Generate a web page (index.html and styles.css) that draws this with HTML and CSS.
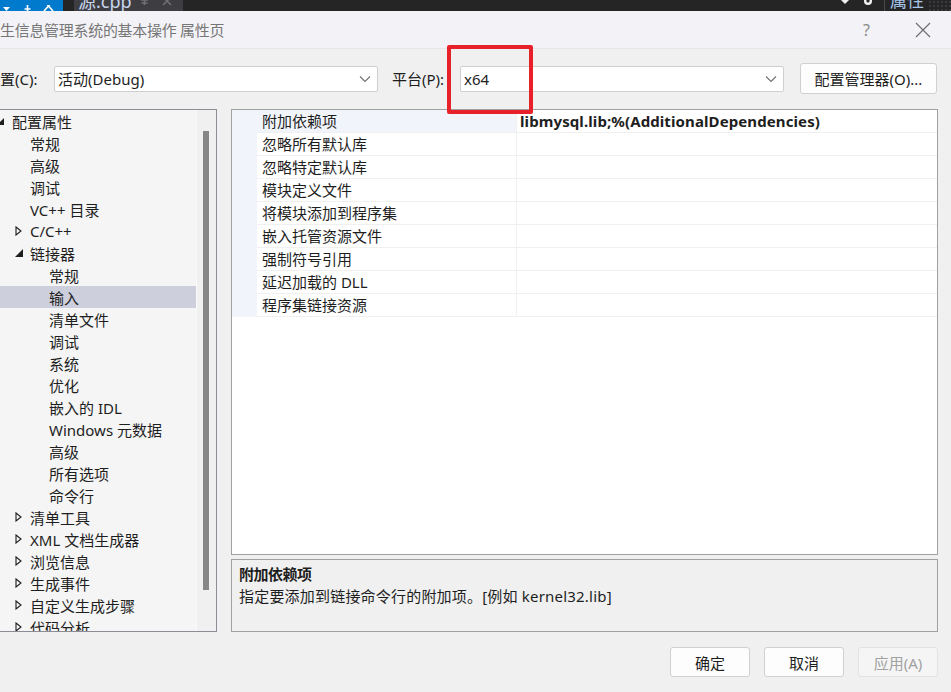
FILE: index.html
```html
<!DOCTYPE html>
<html lang="zh-CN">
<head>
<meta charset="utf-8">
<title>属性页</title>
<link rel="stylesheet" href="styles.css">
</head>
<body>
<div class="page">
  <div class="topbar">
    <div class="tb-blue">
      <svg width="63" height="11" viewBox="0 0 63 11">
        <polygon points="3,2 10,2 6.5,6" fill="#fff"/>
        <path d="M24 -2 L31 -2 M27.5 -2 V4 M24.5 4 H30.5 M27.5 4 V9" stroke="#fff" stroke-width="1.6" fill="none"/>
        <path d="M44 -4 L53 6 M53 -4 L44 6" stroke="#fff" stroke-width="1.6" fill="none"/>
      </svg>
    </div>
    <div class="tb-gap"></div>
    <div class="tb-tab">
      <span class="tb-tabtext">源.cpp</span>
      <svg width="40" height="11" viewBox="0 0 40 11" class="tb-tabicons">
        <path d="M3 0 H10 M6.5 0 V5 M3.5 3 H9.5" stroke="#6f6f74" stroke-width="1.5" fill="none"/>
        <path d="M25 -3 L33 5 M33 -3 L25 5" stroke="#6f6f74" stroke-width="1.5" fill="none"/>
      </svg>
    </div>
    <div class="tb-fill"></div>
    <svg width="40" height="11" viewBox="0 0 40 11" class="tb-right">
      <polygon points="0,0 8,0 4,4" fill="#f1f1f1"/>
      <circle cx="27" cy="1" r="4" fill="#f1f1f1"/>
      <circle cx="27" cy="1" r="1.6" fill="#252526"/>
    </svg>
    <div class="tb-sep"></div>
    <span class="tb-prop">属性</span>
    <div class="tb-dots"></div>
  </div>

  <div class="titlebar">
    <span class="title">生信息管理系统的基本操作 属性页</span>
    <span class="help">?</span>
    <svg class="close" width="16" height="16" viewBox="0 0 16 16">
      <path d="M1 1 L15 15 M15 1 L1 15" stroke="#6e6e6e" stroke-width="1.2" fill="none"/>
    </svg>
  </div>

  <div class="config">
    <span class="lbl lbl-c">置(C):</span>
    <div class="select">
      <span>活动(Debug)</span>
      <svg width="12" height="8" viewBox="0 0 12 8"><path d="M1 1.5 L6 6.5 L11 1.5" stroke="#707070" stroke-width="1.1" fill="none"/></svg>
    </div>
    <span class="lbl lbl-p">平台(P):</span>
    <div class="select">
      <span>x64</span>
      <svg width="12" height="8" viewBox="0 0 12 8"><path d="M1 1.5 L6 6.5 L11 1.5" stroke="#707070" stroke-width="1.1" fill="none"/></svg>
    </div>
    <button class="btn cfgbtn">配置管理器(O)...</button>
  </div>

  <div class="main">
    <div class="tree">
      <div class="tree-list">
        <div class="row l1"><span class="tw"><svg width="7" height="7" viewBox="0 0 7 7"><polygon points="7,0 7,7 0,7" fill="#1e1e1e"/></svg></span>配置属性</div>
        <div class="row l2"><span class="tw"></span>常规</div>
        <div class="row l2"><span class="tw"></span>高级</div>
        <div class="row l2"><span class="tw"></span>调试</div>
        <div class="row l2"><span class="tw"></span>VC++ 目录</div>
        <div class="row l2"><span class="tw"><svg width="7" height="10" viewBox="0 0 7 10"><polygon points="1,1 6,5 1,9" fill="none" stroke="#1e1e1e" stroke-width="1.1"/></svg></span>C/C++</div>
        <div class="row l2"><span class="tw"><svg width="8" height="8" viewBox="0 0 8 8"><polygon points="8,0 8,8 0,8" fill="#1e1e1e"/></svg></span>链接器</div>
        <div class="row l3"><span class="tw"></span>常规</div>
        <div class="row l3 sel"><span class="tw"></span>输入</div>
        <div class="row l3"><span class="tw"></span>清单文件</div>
        <div class="row l3"><span class="tw"></span>调试</div>
        <div class="row l3"><span class="tw"></span>系统</div>
        <div class="row l3"><span class="tw"></span>优化</div>
        <div class="row l3"><span class="tw"></span>嵌入的 IDL</div>
        <div class="row l3"><span class="tw"></span>Windows 元数据</div>
        <div class="row l3"><span class="tw"></span>高级</div>
        <div class="row l3"><span class="tw"></span>所有选项</div>
        <div class="row l3"><span class="tw"></span>命令行</div>
        <div class="row l2"><span class="tw"><svg width="7" height="10" viewBox="0 0 7 10"><polygon points="1,1 6,5 1,9" fill="none" stroke="#1e1e1e" stroke-width="1.1"/></svg></span>清单工具</div>
        <div class="row l2"><span class="tw"><svg width="7" height="10" viewBox="0 0 7 10"><polygon points="1,1 6,5 1,9" fill="none" stroke="#1e1e1e" stroke-width="1.1"/></svg></span>XML 文档生成器</div>
        <div class="row l2"><span class="tw"><svg width="7" height="10" viewBox="0 0 7 10"><polygon points="1,1 6,5 1,9" fill="none" stroke="#1e1e1e" stroke-width="1.1"/></svg></span>浏览信息</div>
        <div class="row l2"><span class="tw"><svg width="7" height="10" viewBox="0 0 7 10"><polygon points="1,1 6,5 1,9" fill="none" stroke="#1e1e1e" stroke-width="1.1"/></svg></span>生成事件</div>
        <div class="row l2"><span class="tw"><svg width="7" height="10" viewBox="0 0 7 10"><polygon points="1,1 6,5 1,9" fill="none" stroke="#1e1e1e" stroke-width="1.1"/></svg></span>自定义生成步骤</div>
        <div class="row l2"><span class="tw"><svg width="7" height="10" viewBox="0 0 7 10"><polygon points="1,1 6,5 1,9" fill="none" stroke="#1e1e1e" stroke-width="1.1"/></svg></span>代码分析</div>
      </div>
      <div class="vscroll"><div class="thumb"></div></div>
    </div>

    <div class="rightcol">
      <div class="grid">
        <div class="grow first"><span class="gut"></span><span class="gname">附加依赖项</span><span class="gval">libmysql.lib;%(AdditionalDependencies)</span></div>
        <div class="grow"><span class="gut"></span><span class="gname">忽略所有默认库</span><span class="gval"></span></div>
        <div class="grow"><span class="gut"></span><span class="gname">忽略特定默认库</span><span class="gval"></span></div>
        <div class="grow"><span class="gut"></span><span class="gname">模块定义文件</span><span class="gval"></span></div>
        <div class="grow"><span class="gut"></span><span class="gname">将模块添加到程序集</span><span class="gval"></span></div>
        <div class="grow"><span class="gut"></span><span class="gname">嵌入托管资源文件</span><span class="gval"></span></div>
        <div class="grow"><span class="gut"></span><span class="gname">强制符号引用</span><span class="gval"></span></div>
        <div class="grow"><span class="gut"></span><span class="gname">延迟加载的 DLL</span><span class="gval"></span></div>
        <div class="grow"><span class="gut"></span><span class="gname">程序集链接资源</span><span class="gval"></span></div>
      </div>
      <div class="desc">
        <div class="desc-title">附加依赖项</div>
        <div class="desc-text">指定要添加到链接命令行的附加项。[例如 kernel32.lib]</div>
      </div>
    </div>
  </div>

  <div class="footer">
    <button class="btn fbtn">确定</button>
    <button class="btn fbtn">取消</button>
    <button class="btn fbtn disabled">应用(A)</button>
  </div>

  <div class="redbox"></div>
</div>
</body>
</html>
```

FILE: styles.css
```css
* { box-sizing: border-box; }
html, body { margin: 0; padding: 0; }
body {
  width: 951px;
  height: 692px;
  overflow: hidden;
  background: #f0f0f0;
  font-family: "Noto Sans", "Noto Sans CJK SC", sans-serif;
  font-size: 15px;
  color: #1e1e1e;
}
.page { position: relative; width: 951px; height: 692px; }

/* top dark bar */
.topbar {
  height: 11px;
  background: #252526;
  display: flex;
  overflow: hidden;
}
.tb-blue { width: 63px; background: #007acc; flex: none; }
.tb-gap { width: 11px; flex: none; }
.tb-tab {
  width: 109px;
  flex: none;
  background: #3e3e42;
  display: flex;
  position: relative;
  overflow: hidden;
}
.tb-tabtext {
  color: #c9d6ee;
  font-size: 18px;
  line-height: 18px;
  margin-top: -8px;
  margin-left: 4px;
  width: 60px;
  flex: none;
}
.tb-tabicons { margin-left: 0; flex: none; }
.tb-fill { flex: 1; }
.tb-right { flex: none; margin-right: 3px; }
.tb-sep { width: 1px; background: #4a4a4e; margin: 0 5px 0 0; flex: none; }
.tb-prop {
  color: #a8c6ec;
  font-size: 17px;
  line-height: 17px;
  margin-top: -8px;
  width: 38px;
  flex: none;
}
.tb-dots {
  width: 23px;
  flex: none;
  background-image: radial-gradient(#3a3a3e 1px, transparent 1.2px);
  background-size: 4px 4px;
}

/* title bar */
.titlebar {
  height: 38px;
  background: #f3f3f7;
  border-bottom: 1px solid #e6e6ea;
  display: flex;
  align-items: center;
}
.title {
  color: #767676;
  font-size: 15px;
  letter-spacing: -0.3px;
  flex: 1;
}
.help {
  color: #8a8a8a;
  font-size: 16px;
  margin-right: 45px;
}
.close { margin-right: 20px; }

/* config row */
.config {
  height: 60px;
  display: flex;
  align-items: center;
  padding-bottom: 1px;
}
.lbl { flex: none; }
.lbl-c { width: 54px; }
.lbl-p { width: 68px; margin-left: 14px; }
.select {
  width: 324px;
  height: 26px;
  background: #fff;
  border: 1px solid #cfcfcf;
  border-radius: 2px;
  display: flex;
  align-items: center;
  justify-content: space-between;
  padding: 0 6px 0 3px;
}
.btn {
  font-family: "Noto Sans", "Noto Sans CJK SC", sans-serif;
  font-size: 15px;
  color: #1e1e1e;
  background: #fdfdfd;
  border: 1px solid #d0d0d0;
  border-radius: 3px;
  padding: 0;
}
.cfgbtn {
  width: 137px;
  height: 31px;
  margin-left: 16px;
}

/* main area */
.main {
  display: flex;
  height: 523px;
}
.tree {
  width: 218px;
  margin-left: -1px;
  border: 1px solid #8c8c94;
  background: #f5f5f5;
  display: flex;
  overflow: hidden;
}
.tree-list { width: 196px; flex: none; overflow: hidden; }
.row {
  height: 22px;
  display: flex;
  align-items: center;
  white-space: nowrap;
}
.row.sel { background: #cdcfdc; }
.tw { width: 15px; flex: none; display: flex; align-items: center; }
.l1 { padding-left: 0; }
.l1 .tw { margin-left: -3px; width: 15px; }
.l2 { padding-left: 15px; }
.l3 { padding-left: 34px; }
.vscroll {
  flex: 1;
  background: #f0f0f0;
  border-left: 1px solid #fafafa;
  padding: 21px 0 0 6px;
}
.thumb { width: 6px; height: 459px; background: #868686; }

.rightcol {
  width: 707px;
  margin-left: 14px;
  display: flex;
  flex-direction: column;
  gap: 4px;
}
.grid {
  height: 446px;
  background: #fff;
  border: 1px solid #a0a0a0;
}
.grow {
  display: flex;
  height: 23px;
}
.gut { width: 25px; flex: none; background: #f1f5fb; }
.gname {
  width: 260px;
  flex: none;
  padding-left: 5px;
  line-height: 22px;
  border-bottom: 1px solid #f0f0f0;
  border-right: 1px solid #f0f0f0;
  white-space: nowrap;
}
.gval {
  flex: 1;
  padding-left: 3px;
  line-height: 22px;
  font-weight: 700;
  border-bottom: 1px solid #f0f0f0;
  white-space: nowrap;
  letter-spacing: 0.1px;
}
.grow.first .gname { background: #f1f5fb; }

.desc {
  height: 73px;
  border: 1px solid #a0a0a0;
  background: #f0f0f0;
  padding: 3px 7px;
}
.desc-title { font-weight: 700; line-height: 22px; letter-spacing: -0.5px; }
.desc-text { line-height: 22px; letter-spacing: 0.2px; }

/* footer */
.footer {
  display: flex;
  justify-content: flex-end;
  gap: 14px;
  padding: 15px 13px 0 0;
}
.fbtn { width: 80px; height: 30px; }
.fbtn.disabled { color: #a2a2a2; background: #f5f5f5; border-color: #e2e2e2; }

/* red annotation rectangle */
.redbox {
  position: absolute;
  left: 447px;
  top: 45px;
  width: 86px;
  height: 69px;
  border: 4px solid #e8202a;
  border-radius: 2px;
}
```
